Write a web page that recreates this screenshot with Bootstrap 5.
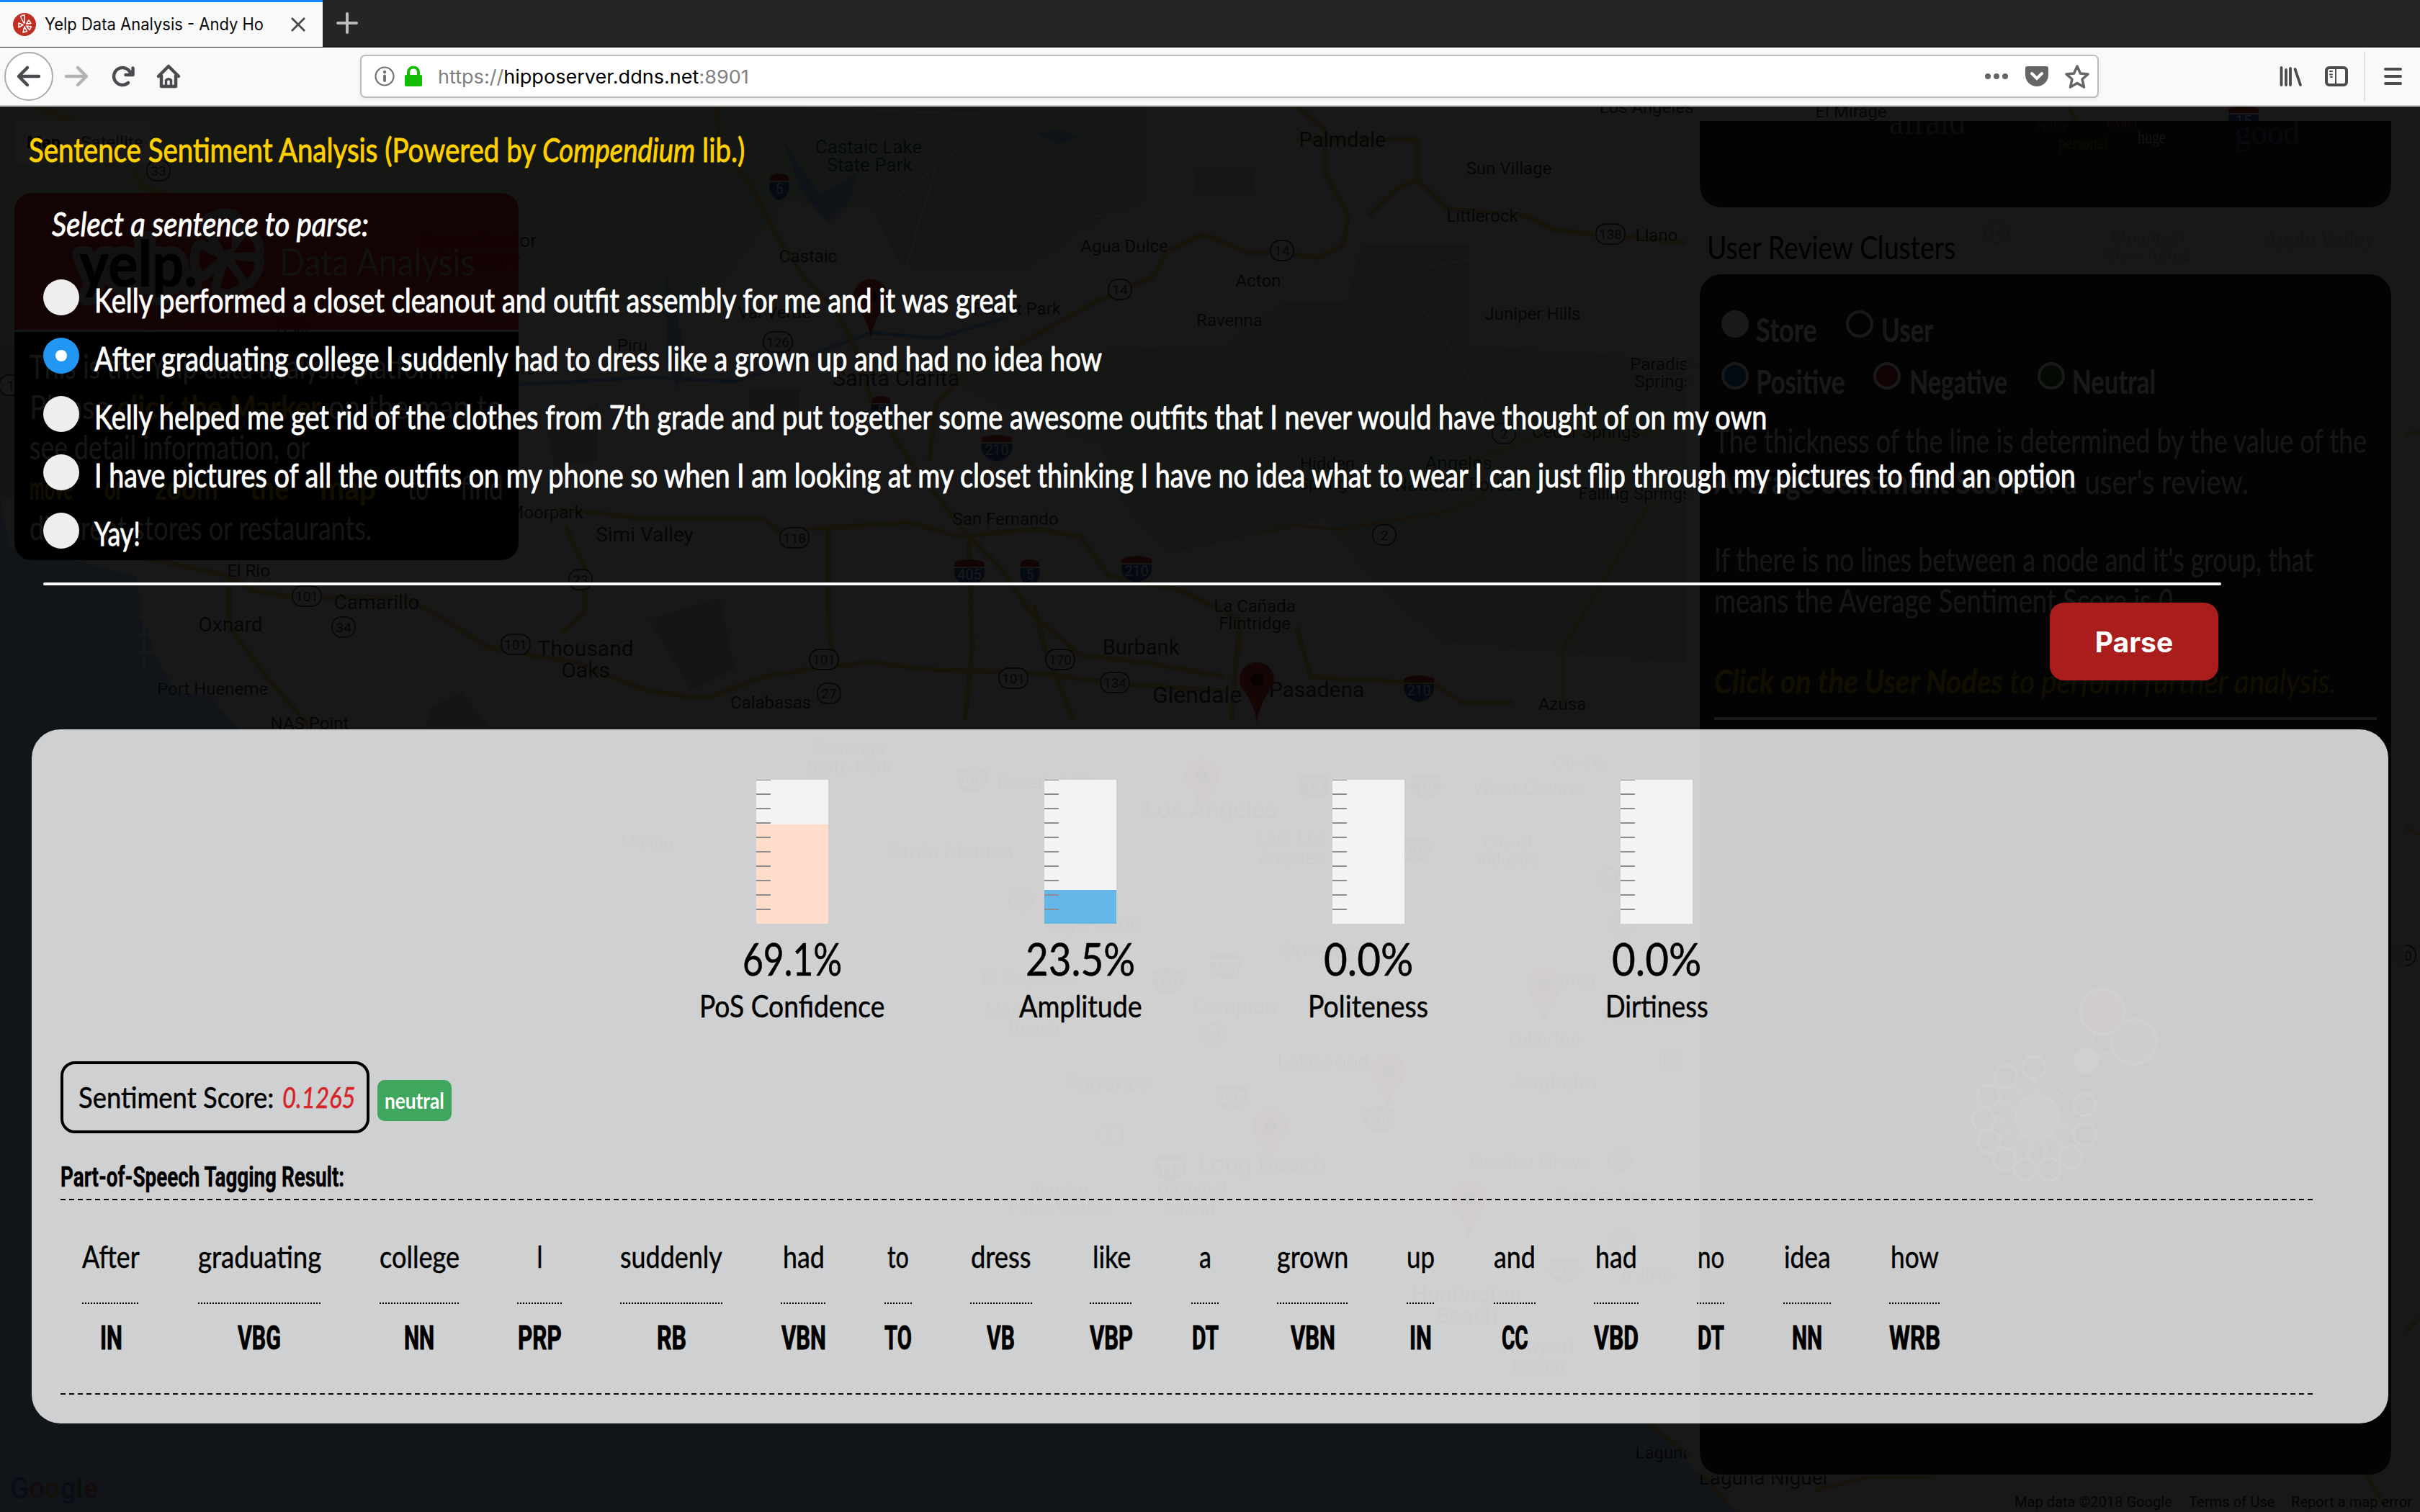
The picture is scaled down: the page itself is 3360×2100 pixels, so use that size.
<!DOCTYPE html>
<html lang="en">
<head>
<meta charset="utf-8">
<title>Yelp Data Analysis - Andy Ho</title>
<link rel="stylesheet" href="https://cdn.jsdelivr.net/npm/bootstrap@5.3.0/dist/css/bootstrap.min.css">
<style>
html,body{width:3360px;height:2100px;overflow:hidden}
body{font-family:Lato,"Open Sans",sans-serif;color:#000;background:#111}
[data-w]{display:inline-block;white-space:nowrap;flex:none;transform-origin:0 50%}
.tabstrip{height:66px;background:#252525;border-bottom:2px solid #1c1c1c;font-family:Inter,sans-serif}
.tab{width:448px;height:66px;background:#f9f9fa;border-top:4px solid #0a84ff;padding-left:18px;font-size:24px;color:#0c0c0d}
.toolbar{height:82px;background:#f9f9fa;border-bottom:2px solid #ccc;font-family:Inter,sans-serif}
.urlbar{width:2414px;height:60px;background:#fff;border:2px solid #bbb;border-radius:7px;box-shadow:0 2px 6px rgba(0,0,0,.06);font-size:26px}
.urlbar .dim{color:#808080}
.ico{display:block;flex:none}
.stage{height:1952px}
.mapart,.veil{left:0;top:0;width:3360px;height:1952px}
.veil{background:rgba(0,0,0,.9)}
.maptype{left:20px;top:20px;width:188px;height:59px;background:#fff;border-radius:4px;font:24px Roboto,sans-serif;color:#565656}
.intro{left:20px;top:120px;width:700px;height:510px;border-radius:24px;overflow:hidden;color:#ddd}
.intro-head{height:190px;background:rgba(205,8,14,.88)}
.intro-body{height:317px;margin-top:3px;background:rgba(0,0,0,.985);padding:20px 21px;font-size:46px;line-height:56px}
.hl{color:#b89a00}
.rail{left:2341px;top:20px;width:999px;height:1882px;background:rgba(245,245,245,.8);border-radius:0 0 30px 30px;padding:0 20px 0 19px}
.cloudbox{height:120px;background:rgba(0,0,0,.85);border-radius:0 0 30px 30px;overflow:hidden;font-family:"Liberation Serif",serif}
.cloudbox span{position:absolute;line-height:1}
.clusterbox{height:1667px;background:rgba(0,0,0,.85);border-radius:30px;color:#fff;font-size:46px}
.legend{height:72px}
.legend b{padding-top:6px}
.dot{width:38px;height:38px;border-radius:50%;border:4px solid #fff;flex:none}
.railtitle{height:93px;font-size:44px;line-height:111px;padding-left:10px}
.clusterbox p{margin:0;line-height:57px;color:#e8e8e8;white-space:nowrap}
.sheet{color:#fff;-webkit-text-stroke:.9px currentColor}
.heading{font-size:46px;line-height:56px;color:#ffd000;padding-left:40px;margin-top:32px}
.ask{font-size:46px;line-height:56px;padding-left:72px;margin-top:47px;font-style:italic}
.opts{padding:37px 0 0 60px}
.opt{height:81px;gap:21px;font-size:46px;line-height:81px}
.knob{width:50px;height:50px;border-radius:50%;background:#eee;margin-top:12px;flex:none}
.knob.on{background:#2196f3}
.knob.on::after{content:"";display:block;width:16px;height:16px;border-radius:50%;background:#fff;margin:17px}
.rule{width:3024px;height:4px;background:#fff;border-radius:2px;margin:28px 0 0 60px}
.parse{width:234px;height:108px;margin:24px 280px 0 auto;border:0;border-radius:20px;background:rgba(183,31,31,.92);color:#fff;font:700 39px Inter,sans-serif;-webkit-text-stroke:0}
.result{width:3272px;height:964px;margin:68px 0 0 44px;border-radius:40px;background:rgba(255,255,255,.8);color:#000;padding:70px 104px 0 40px;-webkit-text-stroke:.5px #000}
.gauges{width:1600px;margin-left:816px}
.gauge{width:400px}
.tube{width:100px;height:200px;background:#f3f3f3;position:relative}
.tube .fillbar{position:absolute;left:0;right:0;bottom:0}
.tube .ticks{position:absolute;left:0;top:0;width:20px;height:199px;background:repeating-linear-gradient(#8c8c8c 0 1px,transparent 1px 19px,#8c8c8c 19px 20px)}
.pct{font-size:62px;line-height:76px;margin-top:10px}
.cap{font-size:42px;line-height:50px;margin-top:3px}
.scorebox{width:429px;height:100px;border:4px solid #000;border-radius:20px;padding-left:21px;font-size:41px;gap:12px}
.tagpill{width:103px;height:57px;border-radius:10px;background:#3fa65e;color:#fff;font-size:30px;font-weight:700;margin:9px 0 0 11px;-webkit-text-stroke:0}
.narrow{font-family:Roboto,sans-serif;font-weight:700}
.postitle{font-size:39px;line-height:46px;margin-top:38px;height:53px}
.dash{height:2px;background:repeating-linear-gradient(90deg,#000 0 7px,transparent 7px 12px)}
.poslist{gap:80.8px;padding-left:30px;height:268px;padding-top:51px}
.pos .w{font-size:42px;line-height:54px}
.pos .d{height:2px;margin-top:37px;background:repeating-linear-gradient(90deg,#000 0 2px,transparent 2px 4px)}
.pos .t{font-size:47px;line-height:54px;margin-top:20px;-webkit-text-stroke:1px #000}
</style>
<script src="https://cdn.jsdelivr.net/npm/bootstrap@5.3.0/dist/js/bootstrap.bundle.min.js"></script>
</head>
<body class="d-flex flex-column">
<header>
 <div class="tabstrip d-flex align-items-center">
  <div class="tab d-flex align-items-center">
   <svg class="ico" width="32" height="32" viewBox="-16 -16 32 32"><circle r="16" fill="#c12e23"/><g fill="none" stroke="#fff" stroke-width="1.500" stroke-linejoin="round"><path d="M-1 -2L-5.500 -11Q-3 -13.500 0 -13L0 -2ZM2.500 -1L6 -6L9 -1.500ZM2.500 2L9.500 3L7 7.500ZM0 3L3.500 9.500L-2 11ZM-2 0.500L-8 4V-2Z"/></g></svg>
   <span data-w="304" style="margin-left:12px">Yelp Data Analysis - Andy Ho</span>
   <svg class="ico" style="margin-left:37px" width="22" height="22"><path d="M2 2L20 20M20 2L2 20" stroke="#4a4a4a" stroke-width="2.8"/></svg>
  </div>
  <svg class="ico" style="margin-left:19px" width="30" height="30"><path d="M15 2V28M2 15H28" stroke="#bbb" stroke-width="4" stroke-linecap="round"/></svg>
 </div>
 <div class="toolbar d-flex align-items-center">
  <svg class="ico" width="500" height="80" fill="none" stroke="#4a4a4f" stroke-width="4.500" stroke-linecap="round" stroke-linejoin="round">
   <circle cx="40" cy="40" r="33" fill="#fff" stroke="#aaa" stroke-width="2"/>
   <path d="M54 40H27M38 28L26 40L38 52"/><path stroke="#b3b3b5" d="M92 40H119M108 28L120 40L108 52"/>
   <path d="M178 49A12 12 0 1 1 181 35M184.500 28.500V38H174.500"/>
   <path d="M220 40L234 26L248 40M224 39V54H244V39"/><path d="M230.500 54V45.500Q234 42 237.500 45.500V54" stroke-width="3.500"/>
  </svg>
  <div class="urlbar d-flex align-items-center">
   <svg class="ico" width="90" height="40" viewBox="502 86 90 40"><circle cx="534" cy="106" r="12.5" fill="none" stroke="#737373" stroke-width="2.2"/><path d="M534 105.500V112" stroke="#737373" stroke-width="4" stroke-linecap="round"/><circle cx="534" cy="100" r="2.200" fill="#737373"/><rect x="562" y="104" width="24" height="16" rx="2" fill="#12bc00"/><path d="M567 106V100a7 6.5 0 0 1 14 0v6" fill="none" stroke="#12bc00" stroke-width="4"/></svg>
   <span style="margin-left:16px" data-w="432"><span class="dim">https://</span>hipposerver.ddns.net<span class="dim">:8901</span></span>
   <svg class="ico ms-auto" width="158" height="60" viewBox="2754 76 158 60"><g fill="#666"><circle cx="2760" cy="106" r="4"/><circle cx="2772" cy="106" r="4"/><circle cx="2784" cy="106" r="4"/><path d="M2815 92H2841a3 3 0 0 1 3 3v9a16 16 0 0 1-32 0v-9a3 3 0 0 1 3-3Z"/></g><path d="M2821 102L2828 109L2835 102" fill="none" stroke="#fff" stroke-width="4" stroke-linecap="round"/><path d="M2884 92L2888.500 102L2899 103L2891 110L2893.500 121L2884 115.500L2874.500 121L2877 110L2869 103L2879.500 102Z" fill="none" stroke="#666" stroke-width="3.500" stroke-linejoin="round"/></svg>
  </div>
  <svg class="ico" width="446" height="80" viewBox="2914 66 446 80" fill="none" stroke="#4a4a4f" stroke-width="4" stroke-linecap="round"><path d="M3167.500 94V118M3174 97V118M3180 95V118M3186.500 96L3194 118" stroke-width="3.800"/><rect x="3230" y="94" width="28" height="24" rx="4"/><path d="M3243 94V118" stroke-width="2"/><path d="M3235 99H3238M3235 103.500H3238M3236 107H3238" stroke-width="2"/><path d="M3283 72V140" stroke="#d7d7db" stroke-width="1.500"/><path d="M3312 96H3333M3312 106H3333M3312 116H3333"/></svg>
 </div>
</header>
<main class="stage position-relative overflow-hidden">
 <svg class="mapart position-absolute" viewBox="0 148 3360 1952" id="map">
  <rect y="148" width="3360" height="1952" fill="#f2f2f1"/>
  <g fill="#cfe0c6"><path d="M0 148H1590V280L1540 300L1430 370L1250 370L1210 290L1090 280L980 420L900 440L820 400L690 450L610 420L0 480Z" opacity=".8"/><path d="M1660 235H1740V270H1660ZM1890 340H2040V480L2340 500V920L2100 900L2000 890L1900 800L1840 720L1620 770L1560 700L1530 620L1380 560L1300 520L1440 490L1700 480L1780 420H1870Z" opacity=".85"/><path d="M0 480H60V690H0ZM760 600L830 560V640L770 650ZM900 860L1000 830L1020 930L960 960ZM600 980L640 960L680 1010H590ZM1040 540H1110V600H1040Z"/></g>
  <path fill="#aad4ff" d="M0 690L14 760L110 780L190 800L196 850L216 910L245 962L290 965L320 1000L390 1070L560 1130L700 1180L860 1210L920 1170L1100 1160L1215 1160L1290 1190L1322 1215L1372 1340L1400 1430L1456 1512L1418 1608L1406 1667L1537 1710L1617 1730L1674 1676L1750 1638L1850 1646L1919 1693L1957 1760L2026 1827L2171 1899L2286 1979L2340 2017L2410 2100H0Z"/>
  <g fill="#8ab4f8" opacity=".8"><path d="M1086 190L1110 230L1140 270L1190 240L1180 280L1150 310L1140 300L1110 260ZM925 380L935 420L955 500L940 540L925 500ZM1440 185L1470 180L1500 190L1470 200Z"/></g>
  <path d="M720 534L800 530L900 524L1020 530L1110 500L1160 480L1210 462L1300 470L1400 440" fill="none" stroke="#8ab4f8" stroke-width="5"/>
  <g fill="none" stroke="#fff" stroke-width="3" opacity=".7" id="grid"></g>
  <g fill="none" stroke="#ecca7c" stroke-width="7" stroke-linejoin="round">
   <path d="M50 148L110 172L140 178M185 235L200 260L230 268M995 148L1000 200L1045 260L1080 330L1120 390L1160 430L1195 500L1210 560L1270 650L1310 700L1340 740L1390 790L1430 850L1500 910L1590 920L1700 940"/>
   <path d="M1800 148L1840 180V240L1872 300L1865 340L1830 358L1770 350L1730 350L1670 325L1620 350L1600 385L1520 420L1430 470L1350 510L1300 560L1290 640"/>
   <path d="M1800 194L1968 194V250L1940 262L1900 300M1968 250L2010 290L2120 300L2160 320L2340 337"/>
   <path d="M775 708L860 716L890 720H1060L1090 745L1110 735L1200 730L1260 725L1330 745L1440 735L1500 745L1540 800L1640 820L1720 860V910"/>
   <path d="M200 775L320 800L350 820L410 830H560L600 850L680 900L800 920L900 960L980 970L1060 940L1120 930L1210 920L1290 930L1440 935L1560 950L1700 960M318 800V870L370 940L430 1010"/>
   <path d="M785 730L812 790V850L780 880M1150 732V850L1155 920M1345 740L1350 900L1340 1000M1436 840L1450 900L1490 1000M1720 870L1710 1000M1800 870L1820 940L1990 950L2030 975L2100 975"/>
   <path d="M1750 740L1800 730L1860 735L2010 710L2060 690L2045 640L2150 600L2250 608L2330 590M2290 700L2230 800L2170 900L2170 980" stroke-width="5"/>
   <path d="M950 1165L1130 1155L1220 1160L1420 1160L1560 1150L1700 1140L1860 1100L2120 1090M1400 1210L1450 1320L1560 1345L1700 1340L1900 1370L2100 1380M1560 1440L1650 1530L1760 1550L1880 1580L1900 1610H2200L2290 1700L2330 1790M1520 1440V1610H1820M1320 1110L1400 1280L1430 1400L1520 1440M1620 1440L1730 1440M1900 1100L1940 1290L1930 1500L1900 1640M2286 1975L2340 2017L2400 2090M2520 2070L2600 2050L2680 2050L2730 2030M3280 2040L3310 2090" stroke-width="6"/>
   <path d="M2500 310H2910V370M3020 330L3060 270M3280 610L3360 600M3340 1150L3360 1160M3330 1860L3360 1830M2872 148L2885 170" stroke-width="5"/>
  </g>
  <g id="marks"></g>
 </svg>
 <div class="maptype position-absolute d-flex align-items-center"><b class="text-black" style="margin-left:17px">Map</b><span style="margin-left:28px">Satellite</span></div>
 <section class="intro position-absolute">
  <div class="intro-head position-relative">
   <svg class="position-absolute" style="left:70px;top:10px" width="290" height="170" viewBox="90 278 290 170">
    <g stroke="#bbb" stroke-width="26" stroke-linejoin="round"><path id="petals" d="M311 348L291 310Q305 300 322 304V345ZM324 351L342 327Q355 336 354 350ZM325 361L354 364Q352 380 343 388ZM315 368L333 392Q322 406 306 400ZM303 358L279 346Q274 364 281 377Z"/></g>
    <text x="110" y="398" font-family="Lato" font-weight="900" font-size="88" textLength="164" lengthAdjust="spacingAndGlyphs" stroke="#bbb" stroke-width="22" stroke-linejoin="round" paint-order="stroke">yelp.</text>
    <use href="#petals" fill="#c8101a"/></svg>
   <span class="position-absolute" style="left:368px;top:64px;font-size:52px;line-height:62px;color:#aaa" data-w="272">Data Analysis</span>
  </div>
  <div class="intro-body">
   <div><span data-w="591">This is the Yelp data analysis platform.</span></div>
   <div><span data-w="657">Please <b class="hl">click the Marker</b> on the map to</span></div>
   <div><span data-w="389">see detail information, or</span></div>
   <div class="d-flex justify-content-between"><b class="hl" data-w="60">move</b><b class="hl" data-w="26">or</b><b class="hl" data-w="88">zoom</b><b class="hl" data-w="54">the</b><b class="hl" data-w="78">map</b><span data-w="29">to</span><span data-w="60">find</span></div>
   <div><span data-w="475">different stores or restaurants.</span></div>
  </div>
 </section>
 <aside class="rail position-absolute">
  <div class="cloudbox position-relative">
   <span style="left:263px;top:-27px;font-size:54px;color:#8878a8" data-w="106">afraid</span>
   <span style="left:467px;top:-6px;font-size:24px;color:#555" data-w="45">entire</span>
   <span style="left:498px;top:18px;font-size:26px;color:#8a7a00" data-w="68">personal</span>
   <span style="left:565px;top:-14px;font-size:28px;color:#a04050" data-w="43">exact</span>
   <span style="left:608px;top:10px;font-size:25px;color:#bbb" data-w="39">huge</span>
   <span style="left:743px;top:-8px;font-size:48px;color:#6a4a90" data-w="90">good</span>
  </div>
  <div class="railtitle"><span data-w="345">User Review Clusters</span></div>
  <div class="clusterbox position-relative">
   <div style="padding:33px 0 0 30px">
    <div class="legend d-flex align-items-center"><i class="dot bg-white"></i><b style="margin:8px 40px 0 10px"><span data-w="85">Store</span></b><i class="dot"></i><b style="margin:8px 0 0 11px"><span data-w="72">User</span></b></div>
    <div class="legend d-flex align-items-center"><i class="dot" style="background:#0f6fa8"></i><b style="margin:8px 40px 0 10px"><span data-w="123">Positive</span></b><i class="dot" style="background:#b01020"></i><b style="margin:8px 41px 0 12px"><span data-w="136">Negative</span></b><i class="dot" style="background:#1f6a30"></i><b style="margin:8px 0 0 10px"><span data-w="116">Neutral</span></b></div>
   </div>
   <div style="padding:25px 20px 0">
    <p><span data-w="906">The thickness of the line is determined by the value of the</span></p>
    <p><span data-w="742"><b>Average Sentiment Score</b> of a user's review.</span></p>
    <p style="margin-top:51px"><span data-w="832">If there is no lines between a node and it's group, that</span></p>
    <p><span data-w="646">means the Average Sentiment Score is <i>0</i>.</span></p>
    <p style="margin-top:55px;color:#b39700;font-style:italic"><span data-w="864"><b>Click on the User Nodes</b> to perform further analysis.</span></p>
    <div style="height:4px;background:#fff;margin-top:22px"></div>
   </div>
  </div>
  <svg class="position-absolute" style="left:0;top:1100px" width="999" height="600" viewBox="2341 1268 999 600" id="nodes"></svg>
 </aside>
 <div class="position-absolute" style="left:14px;top:1895px;font:500 40px Roboto,sans-serif;line-height:50px;opacity:.6"><span data-w="122"><span style="color:#2050d0">G</span><span style="color:#d93025">o</span><span style="color:#d09000">o</span><span style="color:#2050d0">g</span><span style="color:#188038">l</span><span style="color:#d93025">e</span></span></div>
 <div class="position-absolute bottom-0 end-0 d-flex" style="font:20px Roboto,sans-serif;line-height:28px;gap:23px;padding-right:11px;color:#333"><span data-w="219">Map data ©2018 Google</span><span data-w="119">Terms of Use</span><span data-w="168">Report a map error</span></div>
 <div class="veil position-absolute"></div>

 <section class="sheet position-relative" style="display:flow-root">
  <div class="heading"><span data-w="994">Sentence Sentiment Analysis (Powered by <i>Compendium</i> lib.)</span></div>
  <div class="ask"><span data-w="440">Select a sentence to parse:</span></div>
  <div class="opts">
   <label class="opt d-flex"><span class="knob"></span><span data-w="1281">Kelly performed a closet cleanout and outfit assembly for me and it was great</span></label>
   <label class="opt d-flex"><span class="knob on"></span><span data-w="1399">After graduating college I suddenly had to dress like a grown up and had no idea how</span></label>
   <label class="opt d-flex"><span class="knob"></span><span data-w="2322">Kelly helped me get rid of the clothes from 7th grade and put together some awesome outfits that I never would have thought of on my own</span></label>
   <label class="opt d-flex"><span class="knob"></span><span data-w="2751">I have pictures of all the outfits on my phone so when I am looking at my closet thinking I have no idea what to wear I can just flip through my pictures to find an option</span></label>
   <label class="opt d-flex"><span class="knob"></span><span data-w="64">Yay!</span></label>
  </div>
  <div class="rule"></div>
  <button class="btn parse d-block">Parse</button>
  <div class="result">
   <div class="gauges d-flex">
    <div class="gauge d-flex flex-column align-items-center"><div class="tube"><div class="fillbar" style="height:69.1%;background:#ffdccc"></div><div class="ticks"></div></div><div class="pct"><span data-w="138">69.1%</span></div><div class="cap"><span data-w="257">PoS Confidence</span></div></div>
    <div class="gauge d-flex flex-column align-items-center"><div class="tube"><div class="fillbar" style="height:23.5%;background:#64b7e6"></div><div class="ticks"></div></div><div class="pct"><span data-w="152">23.5%</span></div><div class="cap"><span data-w="171">Amplitude</span></div></div>
    <div class="gauge d-flex flex-column align-items-center"><div class="tube"><div class="ticks"></div></div><div class="pct"><span data-w="124">0.0%</span></div><div class="cap"><span data-w="167">Politeness</span></div></div>
    <div class="gauge d-flex flex-column align-items-center"><div class="tube"><div class="ticks"></div></div><div class="pct"><span data-w="124">0.0%</span></div><div class="cap"><span data-w="143">Dirtiness</span></div></div>
   </div>
   <div class="d-flex align-items-center" style="margin-top:52px">
    <div class="scorebox d-flex align-items-center"><span data-w="271">Sentiment Score:</span><i style="color:#d62427;-webkit-text-stroke-color:#d62427" data-w="102">0.1265</i></div>
    <div class="tagpill d-flex align-items-center justify-content-center"><span data-w="83">neutral</span></div>
   </div>
   <div class="postitle narrow"><span data-w="394">Part-of-Speech Tagging Result:</span></div>
   <div class="dash"></div>
   <div class="poslist d-flex" id="pos"></div>
   <div class="dash"></div>
  </div>
 </section>
</main>
<script>
// word, tag, column width, word width, tag width
const pos=[["After","IN",80,80,31],["graduating","VBG",171,171,60],["college","NN",111,111,42],["I","PRP",62,9,61],["suddenly","RB",142,142,41],["had","VBN",63,58,62],["to","TO",38,30,38],["dress","VB",86,84,39],["like","VBP",60,53,60],["a","DT",38,17,37],["grown","VBN",99,99,62],["up","IN",40,39,31],["and","CC",59,58,37],["had","VBD",62,58,62],["no","DT",39,37,37],["idea","NN",66,65,42],["how","WRB",72,67,71]];
document.getElementById('pos').innerHTML=pos.map(([w,t,c,a,b])=>`<div class="pos d-flex flex-column align-items-center" style="width:${c}px"><div class="w"><span data-w="${a}">${w}</span></div><div class="d align-self-stretch"></div><div class="t narrow"><span data-w="${b}">${t}</span></div></div>`).join('');

// map labels: text, centre x, baseline, size, green?
const labels=[["Castaic Lake",1206,213,26,1],["State Park",1207,238,26,1],["Palmdale",1864,204,29],["Sun Village",2095,242,24],["Littlerock",2058,308,24],["Llano",2300,335,24],["Agua Dulce",1561,350,24],["Acton",1747,398,24],["Ravenna",1707,453,24],["Juniper Hills",2128,444,24],["Castaic",1122,364,24],["Forest Park",1412,437,24],["Santa Clarita",1244,536,31],["Los Angeles",2286,157,24],["Paradise",2310,514,24],["Springs",2310,538,24],["Cedar Springs",2202,608,24],["Hidden",1843,652,24],["Springs",1843,680,24],["Angeles",2025,652,26,1],["National Forest",2024,682,26,1],["Falling Springs",2270,694,24],["San Fernando",1396,729,24],["La Cañada",1742,850,24],["Flintridge",1742,874,24],["Burbank",1584,909,29],["Glendale",1662,976,32],["Pasadena",1828,968,30],["Azusa",2169,986,24],["El Mirage",2570,163,24],["Simi Valley",895,752,28],["Moorpark",758,720,24],["El Rio",345,801,24],["Camarillo",523,846,28],["Oxnard",320,877,28],["Thousand",813,911,30],["Oaks",813,941,30],["Port Hueneme",295,965,24],["NAS Point",430,1013,24],["Calabasas",1070,984,24],["Val Verde",1075,442,24],["Piru",878,488,24],["Fillmore",700,520,24],["Wheeler",150,320,24],["Springs",153,343,24],["Sespe Condor",664,343,26],["Sanctuary",664,370,26],["Topanga",1179,1048,26],["State Park",1179,1074,26],["Malibu",898,1178,24],["Santa Monica",1318,1192,29],["Beverly Hills",1455,1095,26],["Los Angeles",1681,1136,34],["East Los",1793,1172,26],["Angeles",1793,1200,26],["West Covina",2123,1104,28],["Covina",2193,1067,24],["City of",2094,1178,24],["Industry",2094,1202,24],["Inglewood",1520,1292,28],["El Segundo",1428,1366,26],["Downey",1830,1330,28],["Compton",1714,1408,28],["Manhattan",1430,1412,26],["Beach",1436,1437,26],["Brea",2190,1370,24],["Yorba Linda",2290,1420,26],["Fullerton",2144,1452,26],["Lakewood",1837,1484,28],["Torrance",1538,1515,30],["Anaheim",2159,1514,30],["Long Beach",1752,1628,34],["Garden Grove",2125,1622,28],["Rancho",1470,1660,24],["Palos Verdes",1470,1685,24],["Terminal",1653,1660,26],["Island",1653,1688,26],["Santa Ana",2227,1672,31],["Irvine",2287,1780,30],["Huntington",2036,1808,31],["Beach",2036,1838,31],["Newport",2136,1880,27],["Beach",2136,1908,27],["Laguna",2310,2026,24],["Laguna Niguel",2448,2062,28],["Mountain",2982,339,24],["View Acres",2982,363,24],["Apple Valley",3220,342,28]];
const rounds=[["33",220,237],["126",1080,475],["14",1780,348],["14",1555,402],["138",2236,325],["2",2088,602],["2",1922,743],["118",1103,747],["23",806,805],["34",477,871],["27",1151,963],["170",1472,916],["134",1548,948],["150",406,457],["1",15,535],["18",2772,323],["1",1543,1576],["22",2249,1611],["91",2320,1473],["55",2253,1723],["91",1686,1437],["60",2235,1221],["57",2250,1285],["90",1417,1250],["60",3338,1327]];
const us101=[["101",426,828],["101",716,895],["101",1144,916],["101",1407,942]];
const inter=[["5",1082,259],["5",1223,568],["405",1346,795],["5",1430,795],["210",1578,790],["210",1970,956],["405",1350,1083],["10",1824,1092],["10",1980,1092],["105",1701,1342],["110",1621,1363],["405",1710,1524],["605",1915,1555],["110",1626,1622],["405",2172,1764],["15",3115,165],["105",1965,1180],["210",1384,622]];
const pins=[[1209,412,468],[1745,944,1004],[1669,1078,1130],[2144,1367,1424],[1927,1488,1545],[1763,1565,1618],[2039,1666,1724]];
let s='';
inter.forEach(([t,x,y])=>{const h=t.length>1?21:13;s+=`<path d="M${x-h} ${y-14}q${h} -8 ${2*h} 0v6h-${2*h}z" fill="#c0392b"/><path d="M${x-h} ${y-6}h${2*h}q3 20 -${h} 25q-${h+3} -5 -${h} -25z" fill="#2f62bb"/><text x="${x}" y="${y+10}" font-size="20" fill="#fff">${t}</text>`});
rounds.concat(us101).forEach(([t,x,y])=>{const h=t.length>2?20:16;s+=`<rect x="${x-h}" y="${y-14}" width="${2*h}" height="28" rx="13" fill="#f0f0f0" stroke="#555" stroke-width="2"/><text x="${x}" y="${y+7}" font-size="19" fill="#444">${t}</text>`});
labels.forEach(([t,x,y,f,g])=>{s+=`<text x="${x}" y="${y}" font-size="${f}" fill="${g?'#2e6b3a':'#444'}" stroke="#fff" stroke-width="2" stroke-opacity=".5" paint-order="stroke">${t}</text>`});
pins.forEach(([x,y,b])=>{s+=`<path d="M${x} ${b}Q${x-4} ${y+32} ${x-20} ${y+13}A24 24 0 1 1 ${x+20} ${y+13}Q${x+4} ${y+32} ${x} ${b}Z" fill="#d8382c"/><circle cx="${x}" cy="${y}" r="9" fill="#5c120f"/>`});
const m=document.getElementById('marks');m.setAttribute('font-family','Roboto, sans-serif');m.setAttribute('text-anchor','middle');m.innerHTML=s;
let g='';
for(let i=0;i<9;i++)g+=`M${1150+i*32} 760V1000M${1130} ${760+i*22}H1430`;
for(let i=0;i<5;i++)g+=`M${200+i*26} 800V930M190 ${810+i*24}H330M${1850+i*90} 148V260`;
g+='M1120 148L1370 160L1340 200L1250 270L1200 330L1150 340M1470 360L1520 300L1650 290L1690 340M1980 370L2080 355L2160 400L2260 470M1950 400L2000 460L2060 560M1300 230L1270 330L1250 400';
document.getElementById('grid').innerHTML=`<path d="${g}"/>`;

// review cluster nodes: x, y, radius, fill
const hub=[2829,1552],ring=[[2824,1482],[2785,1495],[2761,1522],[2754,1555],[2762,1586],[2783,1610],[2812,1624],[2845,1624],[2875,1607],[2895,1576],[2894,1534]];
let n=ring.slice(0,10).map(([x,y])=>`<path d="M${x} ${y}L${hub}" stroke-width="8" opacity=".5"/>`).join('')+`<path d="M${hub}L2897 1473L2919 1405M2897 1473L2963 1447" stroke-width="2"/>`;
n+=ring.map(([x,y])=>`<circle cx="${x}" cy="${y}" r="15.500" fill="#222"/>`).join('');
n+='<circle cx="2829" cy="1552" r="30" fill="#0a86c0"/><circle cx="2897" cy="1473" r="16" fill="#eee"/><circle cx="2919" cy="1405" r="31" fill="#f02c30"/><circle cx="2963" cy="1447" r="31" fill="#0a5060"/>';
const nd=document.getElementById('nodes');nd.setAttribute('stroke','#ddd');nd.setAttribute('stroke-width','3');nd.innerHTML=n;

// condense each line of text to its measured width
document.querySelectorAll('[data-w]').forEach(e=>{const w=+e.dataset.w,k=e.offsetWidth;e.style.transform=`scaleX(${w/k})`;if(getComputedStyle(e).position!=='absolute')e.style.marginRight=(w-k)+'px'});
</script>
</body>
</html>
